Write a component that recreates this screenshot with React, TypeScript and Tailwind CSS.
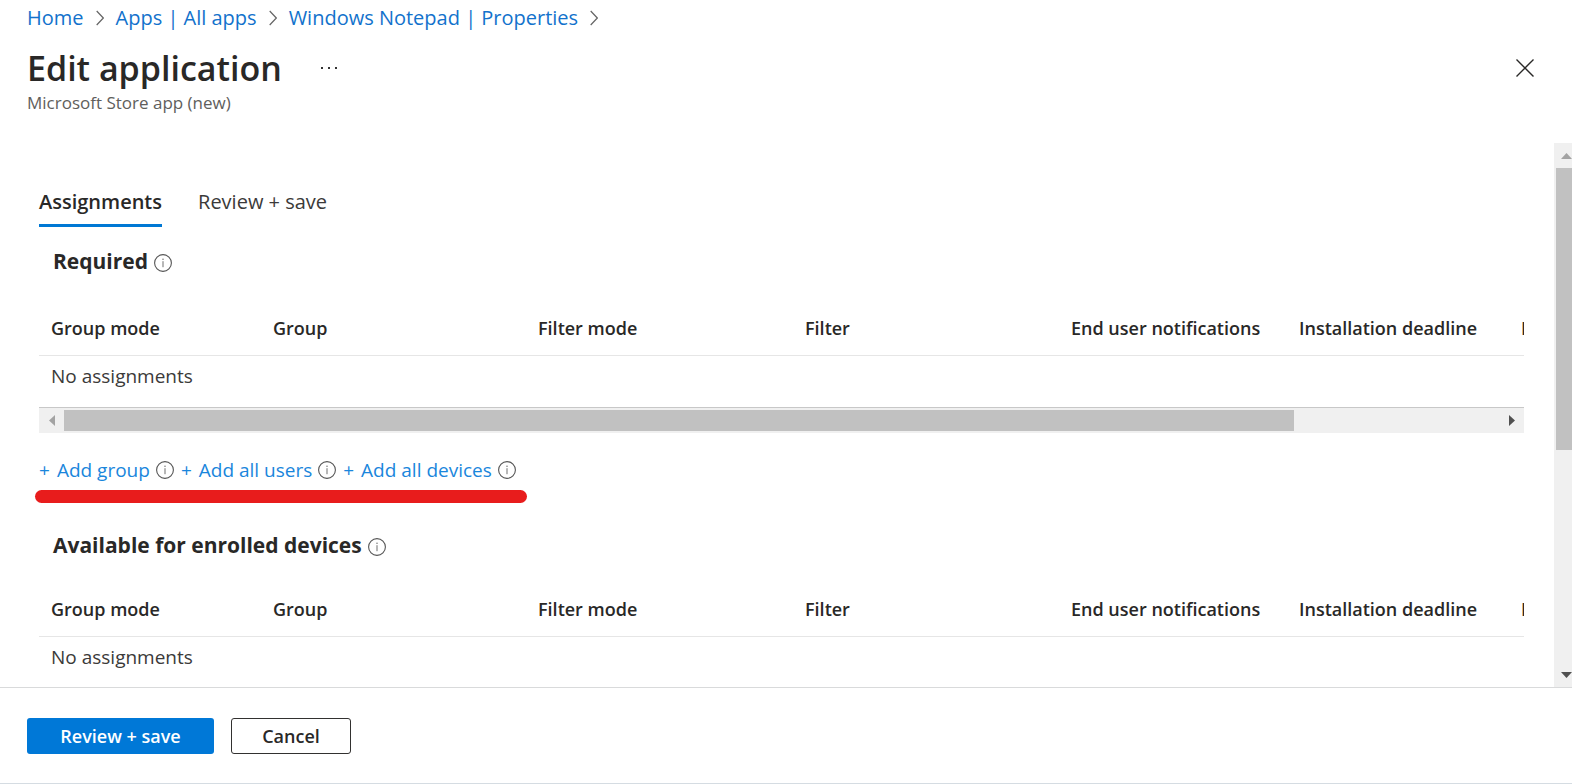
import React, { useState } from 'react';

const COLUMNS = [
  { label: 'Group mode', width: 'w-[222px]' },
  { label: 'Group', width: 'w-[265px]' },
  { label: 'Filter mode', width: 'w-[267px]' },
  { label: 'Filter', width: 'w-[266px]' },
  { label: 'End user notifications', width: 'w-[228px]' },
  { label: 'Installation deadline', width: 'w-[222px]' },
  { label: 'Restart grace period', width: 'w-[263px]' },
];

const BREADCRUMBS = ['Home', 'Apps | All apps', 'Windows Notepad | Properties'];
const ADD_LINKS = ['Add group', 'Add all users', 'Add all devices'];
const TABS = ['Assignments', 'Review + save'];

const InfoIcon: React.FC = () => (
  <svg viewBox="0 0 18 18" className="w-[18px] h-[18px] shrink-0" fill="none" aria-hidden="true">
    <circle cx="9" cy="9" r="8.4" stroke="#555" strokeWidth="1.1" />
    <rect x="8.4" y="4.6" width="1.2" height="1.4" fill="#777" />
    <rect x="8.4" y="7.2" width="1.2" height="6" fill="#888" />
  </svg>
);

const Chevron: React.FC = () => (
  <svg viewBox="0 0 8 16" className="w-2 h-4 shrink-0" fill="none" aria-hidden="true">
    <path d="M0.7 1 7.3 8 0.7 15" stroke="#666" strokeWidth="1.2" />
  </svg>
);

const HorizontalScrollbar: React.FC = () => (
  <div className="flex items-center h-[26px] bg-[#f0f0f0] border-t border-[#c8c8c8]">
    <div className="w-[25px] shrink-0 flex justify-center">
      <svg viewBox="0 0 6 11" className="w-[6px] h-[11px]"><path d="M6 0v11L0 5.5z" fill="#a3a3a3" /></svg>
    </div>
    <div className="flex-1">
      <div className="w-6/7 h-[21px] bg-[#c1c1c1]"></div>
    </div>
    <div className="w-[25px] shrink-0 flex justify-center">
      <svg viewBox="0 0 6 11" className="w-[6px] h-[11px]"><path d="M0 0v11l6-5.5z" fill="#505050" /></svg>
    </div>
  </div>
);

const VerticalScrollbar: React.FC = () => (
  <div className="w-[18px] shrink-0 flex flex-col bg-[#f0f0f0] overflow-hidden">
    <div className="h-[25px] shrink-0 flex items-center pl-[7px]">
      <svg viewBox="0 0 11 6" className="w-[11px] h-[6px] shrink-0"><path d="M0 6h11L5.5 0z" fill="#a3a3a3" /></svg>
    </div>
    <div className="flex-1 pl-[2px]">
      <div className="h-[57%] bg-[#c1c1c1]"></div>
    </div>
    <div className="h-[25px] shrink-0 flex items-center pl-[7px]">
      <svg viewBox="0 0 11 6" className="w-[11px] h-[6px] shrink-0"><path d="M0 0h11L5.5 6z" fill="#505050" /></svg>
    </div>
  </div>
);

const SectionTitle: React.FC<{ title: string }> = ({ title }) => (
  <div className="flex items-center gap-[6px] pl-[14px]">
    <h2 className="text-[21px] leading-7 font-bold">{title}</h2>
    <button type="button" aria-label={`About ${title}`} className="pt-1">
      <InfoIcon />
    </button>
  </div>
);

const AssignmentTable: React.FC<{ label: string }> = ({ label }) => (
  <div>
    <div className="overflow-hidden">
      <table aria-label={label} className="table-fixed w-[1733px] text-left whitespace-nowrap">
        <thead>
          <tr className="h-[54px] border-b border-[#e6e6e6]">
            {COLUMNS.map((column) => (
              <th key={column.label} className={`${column.width} px-3 text-[18px] leading-6 font-semibold`}>
                {column.label}
              </th>
            ))}
          </tr>
        </thead>
        <tbody>
          <tr className="h-[52px]">
            <td colSpan={COLUMNS.length} className="px-3 pb-[10px] text-[19px] leading-6 text-[#3b3a39]">
              No assignments
            </td>
          </tr>
        </tbody>
      </table>
    </div>
    <HorizontalScrollbar />
  </div>
);

const AddLinks: React.FC = () => (
  <div className="relative flex items-center gap-[7px] h-[26px]">
    {ADD_LINKS.map((link) => (
      <div key={link} className="flex items-center gap-[6px]">
        <a href="#add" className="flex gap-[7px] text-[19px] leading-[26px] text-[#1a86dc]">
          <span>+</span>
          <span>{link}</span>
        </a>
        <button type="button" aria-label={`About ${link}`}>
          <InfoIcon />
        </button>
      </div>
    ))}
    {/* Marker under the add links */}
    <div className="absolute top-[33px] -left-1 w-[492px] h-[13px] rounded-full bg-[#e81c1c]"></div>
  </div>
);

const App: React.FC = () => {
  const [activeTab, setActiveTab] = useState('Assignments');

  return (
    <div className="h-screen flex flex-col bg-white text-[#292827] font-['Open_Sans',sans-serif] border-b border-[#d5dce2]">
      <header className="h-[143px] shrink-0 pl-[27px] pr-[38px]">
        <nav aria-label="Breadcrumb" className="flex items-center gap-3 pt-1 text-[20px] leading-7 text-[#1272cc]">
          {BREADCRUMBS.map((crumb) => (
            <React.Fragment key={crumb}>
              <a href="#crumb">{crumb}</a>
              <Chevron />
            </React.Fragment>
          ))}
        </nav>
        <div className="flex items-center pt-3">
          <h1 className="text-[34px] leading-[48px] font-semibold">Edit application</h1>
          <button type="button" aria-label="More" className="ml-[38px]">
            <svg viewBox="0 0 18 4" className="w-[18px] h-1" fill="#333" aria-hidden="true">
              <rect x="1" y="1" width="2" height="2" />
              <rect x="8" y="1" width="2" height="2" />
              <rect x="15" y="1" width="2" height="2" />
            </svg>
          </button>
          <button type="button" aria-label="Close" className="ml-auto">
            <svg viewBox="0 0 18 18" className="w-[18px] h-[18px]" stroke="#292827" strokeWidth="1.4" aria-hidden="true">
              <path d="M0.5 0.5l17 17M17.5 0.5l-17 17" />
            </svg>
          </button>
        </div>
        <p className="text-[17px] leading-[22px] text-[#605e5c]">Microsoft Store app (new)</p>
      </header>

      <div className="flex-1 min-h-0 flex">
        <main className="flex-1 min-w-0 overflow-hidden pl-[39px] pr-[30px] pt-[43px]">
          <div role="tablist" className="flex gap-9 text-[20px] leading-8">
            {TABS.map((tab) => (
              <button
                key={tab}
                type="button"
                role="tab"
                aria-selected={activeTab === tab}
                onClick={() => setActiveTab(tab)}
                className={`pb-[6px] border-b-[3px] ${
                  activeTab === tab ? 'border-[#0078d4] font-semibold' : 'border-transparent text-[#3b3a39]'
                }`}
              >
                {tab}
              </button>
            ))}
          </div>

          <section className="pt-5">
            <SectionTitle title="Required" />
            <div className="pt-[26px]">
              <AssignmentTable label="Required" />
            </div>
            <div className="pt-6">
              <AddLinks />
            </div>
          </section>

          <section className="pt-[48px]">
            <SectionTitle title="Available for enrolled devices" />
            <div className="pt-[23px]">
              <AssignmentTable label="Available for enrolled devices" />
            </div>
          </section>
        </main>
        <VerticalScrollbar />
      </div>

      <footer className="shrink-0 h-[96px] flex items-center gap-[17px] pl-[27px] border-t border-[#d9dadb] text-[18px] leading-6 font-semibold">
        <button type="button" className="w-[187px] h-9 rounded-[3px] bg-[#0078d7] text-white">Review + save</button>
        <button type="button" className="w-[120px] h-9 rounded-[3px] border border-[#323130]">Cancel</button>
      </footer>
    </div>
  );
};

export default App;
